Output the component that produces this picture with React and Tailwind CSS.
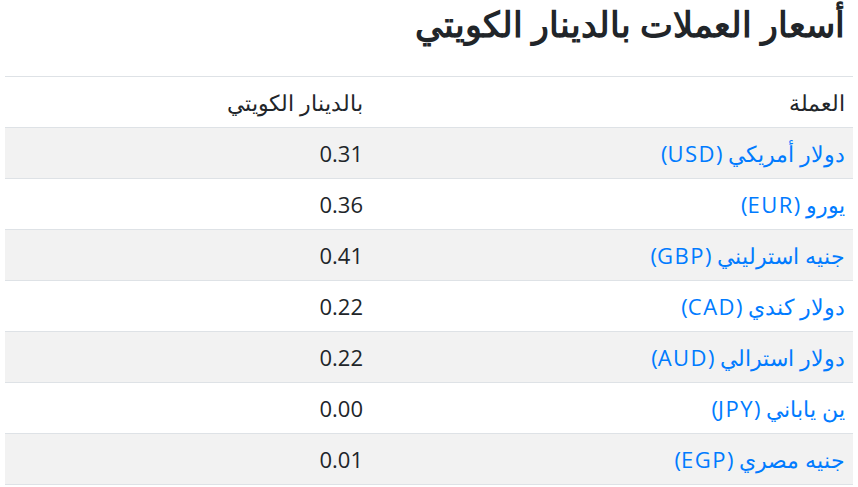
import React from "react";

const rows = [
  ["دولار أمريكي", "USD", "0.31"],
  ["يورو", "EUR", "0.36"],
  ["جنيه استرليني", "GBP", "0.41"],
  ["دولار كندي", "CAD", "0.22"],
  ["دولار استرالي", "AUD", "0.22"],
  ["ين ياباني", "JPY", "0.00"],
  ["جنيه مصري", "EGP", "0.01"],
];

export default function App() {
  return (
    <div
      dir="rtl"
      className="bg-white text-[#212529] px-[5px] font-['Open_Sans','Noto_Sans',sans-serif]"
    >
      <h1 className="text-[35px] font-bold leading-[42px] pt-[3px] pr-[8px] mb-[31px]">
        أسعار العملات بالدينار الكويتي
      </h1>
      <table className="w-full border-collapse text-[22px] leading-[30px]">
        <thead>
          <tr className="border-t border-[#dee2e6]">
            <th className="text-right font-normal px-[8px] py-[10px] w-[482px] border-b border-[#dee2e6]">العملة</th>
            <th className="text-right font-normal px-[8px] py-[10px] border-b border-[#dee2e6]">بالدينار الكويتي</th>
          </tr>
        </thead>
        <tbody>
          {rows.map(([name, code, val], i) => (
            <tr
              key={code}
              className={i % 2 === 0 ? "bg-[#f2f2f2] border-b border-[#dee2e6]" : "bg-white border-b border-[#dee2e6]"}
            >
              <td className="px-[8px] py-[10px]">
                <a href="#" className="text-[#007bff]">
                  {name} <span className="tracking-[1.5px]">({code})</span>
                </a>
              </td>
              <td className="px-[8px] py-[10px]">{val}</td>
            </tr>
          ))}
        </tbody>
      </table>
    </div>
  );
}
